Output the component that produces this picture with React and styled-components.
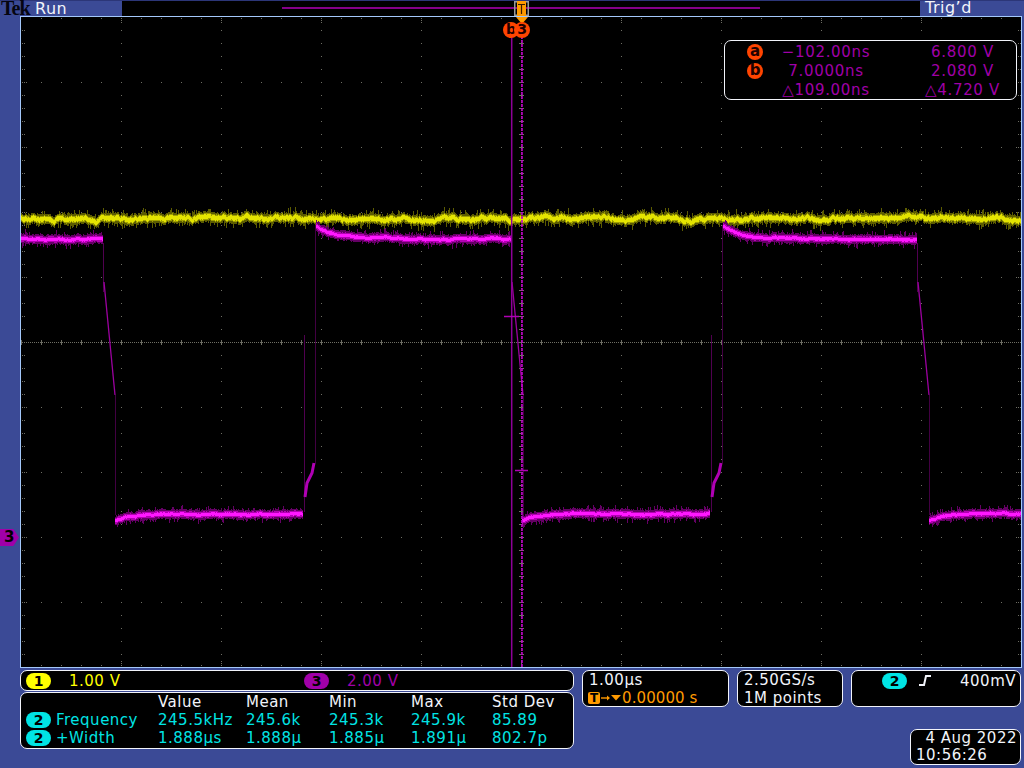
import styled, { createGlobalStyle } from "styled-components";

const GlobalStyle = createGlobalStyle`
  html, body {
    margin: 0;
    width: 1024px;
    height: 768px;
    overflow: hidden;
    background: #3b4a96;
  }
`;

const colors = {
  yellow: "#ffff00",
  purple: "#a000a8",
  cyan: "#00e4e4",
  orange: "#ff9a00",
  cursor: "#ff4400",
  white: "#f2f4fa",
};

const Scope = styled.div`
  width: 1024px;
  height: 768px;
  display: flex;
  flex-direction: column;
  background: #3b4a96;
  font-family: "DejaVu Sans", sans-serif;
  font-size: 15px;
  letter-spacing: 0.5px;
  color: ${colors.white};
`;

const TopBar = styled.div`
  height: 16px;
  display: flex;
  align-items: stretch;
  box-shadow: inset 0 1px #2c3678;
  font-size: 16px;
`;

const TopLeft = styled.div`
  width: 122px;
  display: flex;
  align-items: center;
`;

const TekLogo = styled.span`
  width: 34px;
  padding-left: 1px;
  font-family: "Liberation Serif", serif;
  font-weight: bold;
  font-size: 20px;
  letter-spacing: -1px;
  line-height: 16px;
  color: #050510;
`;

const RecordBar = styled.div`
  position: relative;
  flex: 1;
  margin-top: 1px;
  display: flex;
  align-items: center;
  justify-content: center;
  background: #000;
`;

const RecordTrack = styled.div`
  width: 478px;
  height: 2px;
  margin-top: -1px;
  background: #850088;
`;

const RecordMarker = styled.svg`
  position: absolute;
  left: 392px;
  top: 0;
`;

const TopRight = styled.div`
  width: 104px;
  padding-left: 5px;
  box-sizing: border-box;
  line-height: 15px;
`;

const Screen = styled.div`
  position: relative;
  width: 1002px;
  height: 652px;
  margin-left: 20px;
  background: #000;

  &::after {
    content: "";
    position: absolute;
    inset: 0;
    border: 1.5px solid #a4c8fa;
    pointer-events: none;
  }
`;

const Trace = styled.svg`
  display: block;
`;

const ChannelMarker = styled.div`
  position: absolute;
  left: -20px;
  top: 513px;
  width: 19px;
  height: 17px;
  padding-left: 4px;
  box-sizing: border-box;
  clip-path: polygon(0 0, 70% 0, 100% 50%, 70% 100%, 0 100%);
  background: ${colors.purple};
  color: #000;
  font-size: 15px;
  font-weight: bold;
  line-height: 17px;
`;

const TriggerArrow = styled.div`
  position: absolute;
  left: 496px;
  top: 1px;
  width: 0;
  height: 0;
  border-left: 6px solid transparent;
  border-right: 6px solid transparent;
  border-top: 7px solid ${colors.orange};
`;

const CursorFlag = styled.div`
  position: absolute;
  left: ${({ $x }) => $x}px;
  top: 6px;
  width: 16px;
  height: 16px;
  border-radius: 50%;
  text-align: center;
  background: ${colors.cursor};
  color: #200000;
  font-size: 14px;
  font-weight: bold;
  letter-spacing: 0;
  line-height: 15px;
`;

const Readout = styled.div`
  position: absolute;
  left: 704px;
  top: 24px;
  width: 293px;
  height: 60px;
  box-sizing: border-box;
  padding-top: 1px;
  display: grid;
  grid-template-columns: 38px 126px 1fr;
  grid-auto-rows: 19px;
  align-items: center;
  border: 1.5px solid ${colors.white};
  border-radius: 7px;
  background: #000;
  color: ${colors.purple};
  letter-spacing: 0.7px;
`;

const ReadoutIcon = styled.span`
  justify-self: end;
  width: 16px;
  height: 16px;
  border-radius: 50%;
  text-align: center;
  background: ${colors.cursor};
  color: #200000;
  font-weight: bold;
  letter-spacing: 0;
  line-height: 15px;
`;

const TimeValue = styled.span`
  justify-self: center;
  white-space: nowrap;
`;

const VoltValue = styled(TimeValue)`
  margin-left: 20px;
`;

const Footer = styled.div`
  flex: 1;
  display: flex;
  gap: 8px;
  padding: 2px 0 0 20px;
`;

const LeftPanels = styled.div`
  width: 554px;
  display: flex;
  flex-direction: column;
  gap: 1px;
`;

const RightPanels = styled.div`
  width: 439px;
  display: flex;
  flex-direction: column;
  align-items: flex-end;
  gap: 22px;
`;

const PanelRow = styled.div`
  display: flex;
  gap: 8px;
`;

const Panel = styled.div`
  box-sizing: border-box;
  width: ${({ $w }) => $w}px;
  height: ${({ $h }) => $h}px;
  border: 1.5px solid ${colors.white};
  border-radius: 7px;
  background: #000;
`;

const ChannelPanel = styled(Panel)`
  display: flex;
  align-items: center;
  padding-left: 5px;
`;

const Badge = styled.span`
  flex: none;
  display: inline-block;
  width: 25px;
  height: 16px;
  border-radius: 8px;
  text-align: center;
  background: ${({ $color }) => $color};
  color: #000;
  font-size: 14px;
  font-weight: bold;
  letter-spacing: 0;
  line-height: 16px;
`;

const ChannelScale = styled.span`
  width: ${({ $w }) => $w}px;
  padding-left: 18px;
  box-sizing: border-box;
  color: ${({ $color }) => $color};
`;

const MeasureGrid = styled(Panel)`
  display: grid;
  grid-template-columns: 132px 88px 83px 82px 81px 1fr;
  grid-auto-rows: 18px;
  align-items: center;
  padding: 0 0 0 5px;
  line-height: 18px;
  white-space: nowrap;
`;

const MeasureLabel = styled.span`
  display: flex;
  align-items: center;
  gap: 5px;
  color: ${colors.cyan};
`;

const MeasureValue = styled.span`
  color: ${colors.cyan};
`;

const InfoPanel = styled(Panel)`
  padding: 0 0 0 6px;
  line-height: 18px;
  white-space: nowrap;
`;

const PositionRow = styled.div`
  display: flex;
  align-items: center;
  margin-left: -1px;
  color: ${colors.orange};
  letter-spacing: 0.1px;
`;

const TimeBadge = styled.span`
  width: 12px;
  height: 12px;
  border-radius: 2px;
  text-align: center;
  background: ${colors.orange};
  color: #000;
  font-size: 12px;
  font-weight: bold;
  letter-spacing: 0;
  line-height: 12px;
`;

const TriggerPanel = styled(Panel)`
  display: flex;
  align-items: flex-start;
  padding: 2px 0 0 30px;
  line-height: 16px;
`;

const SlopeIcon = styled.svg`
  margin: 2px 29px 0 12px;
`;

const DatePanel = styled(Panel)`
  padding: 0 3px 0 5px;
  line-height: 17px;
`;

const DateLine = styled.div`
  text-align: right;
`;

// grey graticule dots, all in page coordinates
function dots() {
  let d = "";
  const dot = (x, y, w = 1, h = 1) => {
    d += `M${x} ${y}h${w}v${h}h${-w}z`;
  };
  for (let row = 0; row <= 50; row++) {
    const y = 17 + row * 13;
    const major = row % 5 === 0;
    for (let col = 0; col <= 50; col++) {
      const x = 21 + col * 20;
      if (major && row !== 25 && col > 0 && col < 50) dot(x, row === 0 ? 18 : row === 50 ? 665 : y);
      if (col % 5 === 0 && !major && col > 0 && col < 50 && col !== 25) dot(x, y);
    }
    if (row > 0 && row < 50) {
      dot(22, y);
      dot(24, y);
      dot(1018, y);
      dot(1020, y);
      if (major) {
        dot(26, y);
        dot(1016, y);
      }
    }
  }
  // extra ticks on the top and bottom edges
  for (let col = 1; col < 10; col++) {
    const x = 21 + col * 100;
    dot(x, 20);
    dot(x, 22);
    dot(x, 663);
    dot(x, 661);
  }
  // centre cross
  for (let x = 22; x < 1021; x += 2) dot(x, 342);
  for (let x = 21; x < 1021; x += 20) dot(x, 340, 1, 5);
  for (let y = 18; y < 667; y += 2) dot(521, y);
  for (let y = 17; y < 667; y += 13) dot(519, y, 5, 1);
  return d;
}

// small seeded generator so the noise stays the same from load to load
function makeRandom(seed) {
  let s = seed;
  return () => {
    s = (s * 1664525 + 1013904223) % 4294967296;
    return s / 4294967296;
  };
}

function noiseBand(from, to, level, random, { core, mid, spike, wander }) {
  let dim = "";
  let midTone = "";
  let bright = "";
  let drift = 0;
  for (let x = from; x < to; x++) {
    drift = drift * 0.85 + (random() - 0.5) * wander;
    const y = level(x) + drift;
    const up = mid + 1 + random() * 1.5 + (random() > 0.75 ? random() * spike : 0);
    const down = mid + 1 + random() * 1.5 + (random() > 0.75 ? random() * spike : 0);
    dim += `M${x} ${(y - up).toFixed(1)}V${(y + down).toFixed(1)}`;
    midTone += `M${x} ${(y - mid).toFixed(1)}V${(y + mid).toFixed(1)}`;
    bright += `M${x} ${(y - core).toFixed(1)}V${(y + core).toFixed(1)}`;
  }
  return { dim, midTone, bright };
}

const highLevel = (start) => (x) => 239.5 - 11 * Math.exp(-(x - start) / 16) - 2 * Math.exp(-(x - start) / 90);
const lowLevel = (start) => (x) => 514 + 7 * Math.exp(-(x - start) / 14);

const yellowTrace = noiseBand(21, 1021, () => 218.5, makeRandom(11), {
  core: 2.2,
  mid: 3.4,
  spike: 5,
  wander: 2.4,
});

const magentaSegments = [
  [21, 103, () => 239],
  [316, 511, highLevel(316)],
  [723, 917, highLevel(723)],
  [115, 303, lowLevel(115)],
  [522, 710, lowLevel(522)],
  [929, 1021, lowLevel(929)],
].map(([from, to, level], i) =>
  noiseBand(from, to, level, makeRandom(40 + i), { core: 1.6, mid: 3, spike: 4, wander: 1 })
);

const falls = [103, 511, 917];
const rises = [304, 711];

const gridDots = dots();

function Waveforms() {
  return (
    <Trace width="1002" height="652" viewBox="20 16 1002 652" shapeRendering="crispEdges">
      <path d={gridDots} fill="#6e6e64" />
      <path d={yellowTrace.dim} stroke="#5c5c00" fill="none" />
      <path d={yellowTrace.midTone} stroke="#a0a000" fill="none" />
      <path d={yellowTrace.bright} stroke="#e4e400" fill="none" />
      {magentaSegments.map((band, i) => (
        <g key={i} fill="none">
          <path d={band.dim} stroke="#640064" />
          <path d={band.midTone} stroke="#b400b4" />
          <path d={band.bright} stroke="#ff18ff" />
        </g>
      ))}
      <g fill="none" shapeRendering="auto">
        {falls.map((x) => (
          <g key={x}>
            <path d={`M${x + 0.5} 243V292`} stroke="#500050" />
            <path d={`M${x + 1} 282L${x + 12} 395`} stroke="#9c00a0" strokeWidth="1.3" />
            <path d={`M${x + 12.5} 395V515`} stroke="#420042" />
          </g>
        ))}
        {rises.map((x) => (
          <g key={x}>
            <path d={`M${x + 0.5} 335V512`} stroke="#500050" />
            <path
              d={`M${x + 1} 497L${x + 3} 483L${x + 8} 473L${x + 10} 463`}
              stroke="#b000b4"
              strokeWidth="3"
            />
            <path d={`M${x + 11.5} 225V464`} stroke="#420042" />
          </g>
        ))}
        {/* cursors */}
        <path d="M511.7 36V668" stroke="#8e0098" strokeWidth="1.5" />
        <path d="M522 36V668" stroke="#c400cc" strokeWidth="1.6" strokeDasharray="3 1" />
        <path d="M504 316.5H519M515 470.5H528" stroke="#b000b4" strokeWidth="1.4" />
      </g>
    </Trace>
  );
}

function Slope() {
  return (
    <SlopeIcon width="12" height="11" viewBox="0 0 12 11">
      <path d="M0 10H5L7 1H12" fill="none" stroke={colors.white} strokeWidth="2" />
    </SlopeIcon>
  );
}

const measurements = [
  {
    name: "Frequency",
    values: ["245.5kHz", "245.6k", "245.3k", "245.9k", "85.89"],
  },
  {
    name: "+Width",
    values: ["1.888µs", "1.888µ", "1.885µ", "1.891µ", "802.7p"],
  },
];

const headings = ["Value", "Mean", "Min", "Max", "Std Dev"];

export default function App() {
  return (
    <Scope>
      <GlobalStyle />
      <TopBar>
        <TopLeft>
          <TekLogo>Tek</TekLogo>
          Run
        </TopLeft>
        <RecordBar>
          <RecordTrack />
          <RecordMarker width="15" height="15" viewBox="0 0 15 15">
            <path d="M3 0H12V15H3z" fill={colors.orange} />
            <path d="M0 0H3V1.5H1.5V13.5H3V15H0zM15 0H12V1.5H13.5V13.5H12V15H15z" fill="#9a9a9a" />
            <path d="M4 3.5H11M7.5 3.5V13" stroke="#3a1a00" strokeWidth="1.2" />
          </RecordMarker>
        </RecordBar>
        <TopRight>Trig’d</TopRight>
      </TopBar>

      <Screen>
        <Waveforms />
        <TriggerArrow />
        <CursorFlag $x={483}>b</CursorFlag>
        <CursorFlag $x={494}>3</CursorFlag>
        <ChannelMarker>3</ChannelMarker>
        <Readout>
          <ReadoutIcon>a</ReadoutIcon>
          <TimeValue>−102.00ns</TimeValue>
          <VoltValue>6.800 V</VoltValue>
          <ReadoutIcon>b</ReadoutIcon>
          <TimeValue>7.0000ns</TimeValue>
          <VoltValue>2.080 V</VoltValue>
          <span />
          <TimeValue>△109.00ns</TimeValue>
          <VoltValue>△4.720 V</VoltValue>
        </Readout>
      </Screen>

      <Footer>
        <LeftPanels>
          <ChannelPanel $w={554} $h={21}>
            <Badge $color={colors.yellow}>1</Badge>
            <ChannelScale $w={253} $color={colors.yellow}>1.00 V</ChannelScale>
            <Badge $color={colors.purple}>3</Badge>
            <ChannelScale $w={200} $color={colors.purple}>2.00 V</ChannelScale>
          </ChannelPanel>
          <MeasureGrid $w={554} $h={57}>
            <span />
            {headings.map((h) => (
              <span key={h}>{h}</span>
            ))}
            {measurements.map((m) => [
              <MeasureLabel key={m.name}>
                <Badge $color={colors.cyan}>2</Badge>
                {m.name}
              </MeasureLabel>,
              ...m.values.map((v, i) => <MeasureValue key={m.name + i}>{v}</MeasureValue>),
            ])}
          </MeasureGrid>
        </LeftPanels>

        <RightPanels>
          <PanelRow>
            <InfoPanel $w={147} $h={37}>
              1.00µs
              <PositionRow>
                <TimeBadge>T</TimeBadge>
                <svg width="22" height="12" viewBox="0 0 22 12">
                  <path d="M1 6H9" stroke={colors.orange} strokeWidth="1.4" />
                  <path d="M7 3.5L10 6L7 8.5z" fill={colors.orange} />
                  <path d="M11 3H21L16 8.5z" fill={colors.orange} />
                </svg>
                <span>0.00000 s</span>
              </PositionRow>
            </InfoPanel>
            <InfoPanel $w={106} $h={37}>
              2.50GS/s
              <br />
              1M points
            </InfoPanel>
            <TriggerPanel $w={170} $h={37}>
              <Badge $color={colors.cyan}>2</Badge>
              <Slope />
              400mV
            </TriggerPanel>
          </PanelRow>
          <DatePanel $w={111} $h={36}>
            <DateLine>4 Aug 2022</DateLine>
            10:56:26
          </DatePanel>
        </RightPanels>
      </Footer>
    </Scope>
  );
}
